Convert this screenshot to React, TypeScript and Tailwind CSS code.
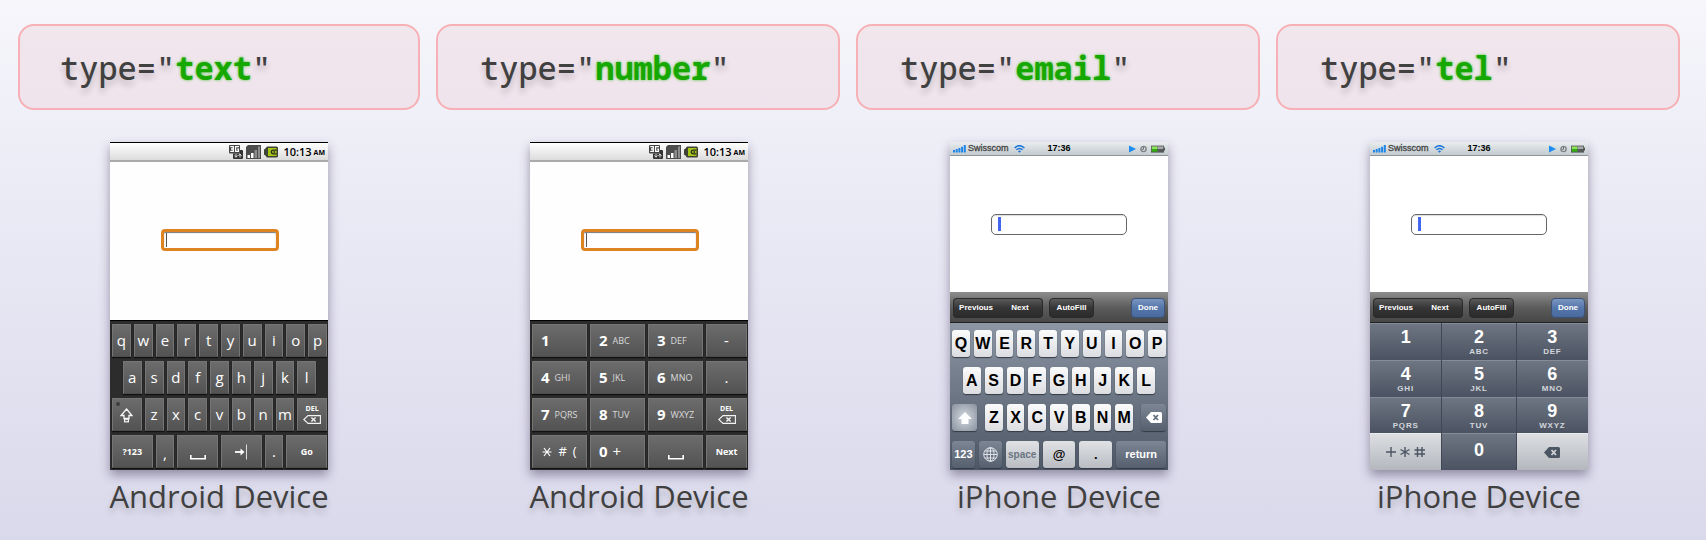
import type { ReactNode } from "react";

const sans = "font-['Open_Sans','Noto_Sans',sans-serif]";

/* ---------- icons ---------- */

function DeleteIcon() {
  return (
    <svg className="h-[9px] w-[18px]" viewBox="0 0 18 9" fill="none" stroke="#f4f4f4">
      <path d="M5 .6H17.4V8.4H5L.8 4.5Z" strokeWidth="1.1" />
      <path d="M8.4 2.5L12.6 6.5M12.6 2.5L8.4 6.5" strokeWidth="1.4" />
    </svg>
  );
}

function BackspaceIcon({ fill, cross }: { fill: string; cross: string }) {
  return (
    <svg className="h-[11px] w-4" viewBox="0 0 16 11">
      <path d="M5 0H14.5Q16 0 16 1.5V9.5Q16 11 14.5 11H5L0 5.5Z" fill={fill} />
      <path d="M7.5 3L12 8M12 3L7.5 8" stroke={cross} strokeWidth="1.8" />
    </svg>
  );
}

function SpaceIcon() {
  return (
    <svg className="mt-3 h-[5px] w-4" viewBox="0 0 16 5" fill="none">
      <path d="M.8 0V3.8H15.2V0" stroke="#fff" strokeWidth="1.6" />
    </svg>
  );
}

function TabIcon() {
  return (
    <svg className="h-4 w-[14px]" viewBox="0 0 14 16" fill="none">
      <path d="M1 8H8" stroke="#fff" strokeWidth="1.8" />
      <path d="M6.5 4.5L10.5 8L6.5 11.5Z" fill="#fff" />
      <path d="M12.5 .5V15.5" stroke="#ddd" />
    </svg>
  );
}

function ShiftOutlineIcon() {
  return (
    <svg className="mt-0.5 h-[15px] w-[13px]" viewBox="0 0 13 15" fill="none" stroke="#f6f6f6">
      <path d="M6.5 1L12 7.5H9V10.5H4V7.5H1Z" strokeWidth="1.3" />
      <rect x="4.6" y="11.2" width="3.8" height="2.6" strokeWidth="1.2" />
    </svg>
  );
}

function ShiftSolidIcon() {
  return (
    <svg className="h-3 w-[14px]" viewBox="0 0 14 12" fill="#fff">
      <path d="M7 0L14 7H10.5V12H3.5V7H0Z" />
    </svg>
  );
}

function GlobeIcon() {
  return (
    <svg className="h-[15px] w-[15px]" viewBox="0 0 15 15" fill="none" stroke="#e8ebef" strokeWidth=".9">
      <circle cx="7.5" cy="7.5" r="6.8" />
      <ellipse cx="7.5" cy="7.5" rx="3.6" ry="6.8" />
      <path d="M7.5 .7V14.3M.7 7.5H14.3M1.8 4H13.2M1.8 11H13.2" />
    </svg>
  );
}

function ThreeGIcon() {
  return (
    <svg className="h-[14px] w-[14px]" viewBox="0 0 14 14" fill="none">
      <rect x="0" y="0" width="11" height="8.5" rx="1" fill="#444" />
      <path d="M1.2 1.7H4.3V6.3H1.2M2 4H4.3M10 1.7H6.6V6.3H9.4V4.2H8.2" stroke="#fff" strokeWidth="1.3" />
      <path d="M11 5H13Q14 5 14 6V13Q14 14 13 14H5Q4 14 4 13V8.5H11Z" fill="#333" />
      <path d="M7 9V12M5.5 10.5L7 12.3L8.5 10.5M11 12.5V9M9.5 10.8L11 9L12.5 10.8" stroke="#ddd" strokeWidth="1" />
    </svg>
  );
}

function AndroidSignalIcon() {
  return (
    <svg className="h-[14px] w-[15px]" viewBox="0 0 15 14">
      <path d="M2 0H15V14H0V2Z" fill="#4c4c4c" />
      <path d="M1.5 10H4V13H1.5ZM5 8H7.5V13H5Z" fill="#fff" />
      <path d="M8.5 5H11V13H8.5ZM12 1.5H14V13H12Z" fill="#8d8d8d" />
    </svg>
  );
}

function AndroidBatteryIcon() {
  return (
    <svg className="h-3 w-[14px]" viewBox="0 0 14 12">
      <path d="M3.5 .5H12.5Q14 .5 14 2V10Q14 11.5 12.5 11.5H3.5Q2 11.5 2 10L0 8.5V3.5L2 2Q2 .5 3.5 .5Z" fill="#3f4336" />
      <rect x="4" y="2" width="8.5" height="8" fill="#a5c714" />
      <path d="M12.5 4.2H9.5Q7.3 4.2 7.3 6T9.5 7.8H12.5M9.5 6H11" stroke="#2c2f22" strokeWidth="1.3" fill="none" />
    </svg>
  );
}

function PhoneSignalIcon() {
  return (
    <svg className="h-2 w-[13px]" viewBox="0 0 13 8" fill="#1d86e8">
      <path d="M0 5H2V7.5H0ZM2.7 4H4.7V7.5H2.7ZM5.4 3H7.4V7.5H5.4ZM8.1 1.8H10.1V7.5H8.1ZM10.8 0H12.8V7.5H10.8Z" />
    </svg>
  );
}

function WifiIcon() {
  return (
    <svg className="h-2 w-[11px]" viewBox="0 0 11 8" fill="none" stroke="#1673dc" strokeWidth="1.4">
      <path d="M.6 3Q5.5 -1.6 10.4 3M2.4 4.8Q5.5 2 8.6 4.8" />
      <path d="M4 6.2Q5.5 5 7 6.2L5.5 7.8Z" fill="#1673dc" stroke="none" />
    </svg>
  );
}

function PhoneStatusIcons() {
  return (
    <svg className="h-2 w-9" viewBox="0 0 36 8">
      <path d="M0 .5L7 4L0 7.5Z" fill="#1b8df0" />
      <circle cx="14.5" cy="4" r="2.6" fill="#d4d8d9" stroke="#7d8385" strokeWidth="1.4" />
      <path d="M14.5 2V4.3H12.8" stroke="#666c6e" strokeWidth=".9" fill="none" />
      <rect x="22" y=".6" width="13" height="7" fill="#58595a" />
      <rect x="22.8" y="1.4" width="5.6" height="2.6" fill="#8fe05c" />
      <rect x="22.8" y="4" width="5.6" height="2.6" fill="#2fae0c" />
      <rect x="28.6" y="1.4" width="5.6" height="2.6" fill="#a8abab" />
      <rect x="35" y="2.5" width="1" height="3" fill="#555" />
    </svg>
  );
}

/* ---------- Android ---------- */

function DroidKey({ children, className = "", label }: { children?: ReactNode; className?: string; label?: string }) {
  return (
    <button
      type="button"
      aria-label={label}
      className={`flex h-[33px] min-w-0 items-center justify-center border border-[#757575] border-b-[#4c4c4c] bg-linear-to-b from-[#6c6c6c] to-[#535353] text-white shadow-[0_1px_1px_#111] ${className}`}
    >
      {children}
    </button>
  );
}

function Letters({ text }: { text: string }) {
  return (
    <>
      {text.split("").map((c) => (
        <DroidKey key={c} className="col-span-2 pb-px text-[15px] leading-none font-medium">
          {c}
        </DroidKey>
      ))}
    </>
  );
}

function DelKey({ className }: { className?: string }) {
  return (
    <DroidKey label="Delete" className={`flex-col gap-0.5 ${className ?? ""}`}>
      <span className="text-[7px] leading-[8px] font-bold">DEL</span>
      <DeleteIcon />
    </DroidKey>
  );
}

function DroidTextKeys() {
  return (
    <div className="grid grid-cols-20 gap-x-[3px] gap-y-1 border-t border-black bg-[#2c2c2c] pt-[3px] pr-px pb-0.5 pl-0.5">
      <Letters text="qwertyuiop" />
      <DroidKey className="col-span-2 col-start-2 pb-px text-[15px] leading-none font-medium">a</DroidKey>
      <Letters text="sdfghjkl" />
      <DroidKey label="Shift" className="relative col-span-3 col-start-1">
        <span className="absolute top-[3px] left-[3px] size-1 rounded-full bg-[#3c3c3c]" />
        <ShiftOutlineIcon />
      </DroidKey>
      <Letters text="zxcvbnm" />
      <DelKey className="col-span-3" />
      <DroidKey className="col-span-4 text-[9px] font-bold">?123</DroidKey>
      <DroidKey className="col-span-2 pt-1 text-[15px] font-medium">,</DroidKey>
      <DroidKey label="Space" className="col-span-4">
        <SpaceIcon />
      </DroidKey>
      <DroidKey label="Tab" className="col-span-4">
        <TabIcon />
      </DroidKey>
      <DroidKey className="col-span-2 text-[15px] font-medium">.</DroidKey>
      <DroidKey className="col-span-4 text-[9px] font-bold">Go</DroidKey>
    </div>
  );
}

function DroidDigit({ digit, sub }: { digit: string; sub?: string }) {
  return (
    <DroidKey className="justify-start! gap-[5px] pl-2 leading-none">
      <span className="text-[15px] font-bold">{digit}</span>
      {sub && <span className="text-[9px] text-[#dadada]">{sub}</span>}
    </DroidKey>
  );
}

function DroidNumberKeys() {
  return (
    <div className="grid grid-cols-[55fr_55fr_55fr_41fr] gap-x-[3px] gap-y-1 border-t border-black bg-[#2c2c2c] pt-[3px] pr-px pb-0.5 pl-0.5">
      <DroidDigit digit="1" />
      <DroidDigit digit="2" sub="ABC" />
      <DroidDigit digit="3" sub="DEF" />
      <DroidKey className="text-[15px] font-medium">-</DroidKey>
      <DroidDigit digit="4" sub="GHI" />
      <DroidDigit digit="5" sub="JKL" />
      <DroidDigit digit="6" sub="MNO" />
      <DroidKey className="text-[15px] font-medium">.</DroidKey>
      <DroidDigit digit="7" sub="PQRS" />
      <DroidDigit digit="8" sub="TUV" />
      <DroidDigit digit="9" sub="WXYZ" />
      <DelKey />
      <DroidKey label="Symbols" className="gap-1.5 text-[13px]">
        <svg className="size-2.5" viewBox="0 0 10 10" fill="none" stroke="#fff" strokeWidth="1.2">
          <path d="M.5 5H9.5M2 1L8 9M8 1L2 9" />
        </svg>
        <span>#</span>
        <span>(</span>
      </DroidKey>
      <DroidKey className="justify-start! gap-[5px] pl-2 leading-none">
        <span className="text-[15px] font-bold">0</span>
        <span className="text-[15px]">+</span>
      </DroidKey>
      <DroidKey label="Space">
        <SpaceIcon />
      </DroidKey>
      <DroidKey className="text-[9px] font-bold">Next</DroidKey>
    </div>
  );
}

function AndroidPhone({ label, children }: { label: string; children: ReactNode }) {
  return (
    <div className={`w-[218px] bg-[#fefefe] shadow-[0_5px_10px_rgba(50,40,70,0.45)] ${sans}`}>
      <div className="flex h-5 items-center justify-end border-t border-b-2 border-t-black border-b-[#aaa] bg-linear-to-b from-white to-[#dcdcdc] pr-[3px] text-black">
        <ThreeGIcon />
        <span className="mx-[3px] flex">
          <AndroidSignalIcon />
        </span>
        <AndroidBatteryIcon />
        <span className="ml-[5px] text-[11px] leading-none font-semibold">10:13</span>
        <span className="ml-0.5 pt-0.5 text-[7px] leading-none font-bold">AM</span>
      </div>
      <div className="flex h-[158px] items-center justify-center pb-0.5 pl-0.5">
        <div className="relative flex">
          <input
            aria-label={label}
            className="h-[22px] w-[118px] rounded-[4px] border-[3px] border-[#df8422] bg-white px-1 text-xs shadow-[inset_0_1px_1px_#777] outline-none"
          />
          <span className="absolute top-1 left-[5px] h-[14px] w-px bg-[#555]" />
        </div>
      </div>
      {children}
    </div>
  );
}

/* ---------- iPhone ---------- */

const arial = "font-['Liberation_Sans',Arial,sans-serif]";

function IPhone({ label, children }: { label: string; children: ReactNode }) {
  const bar =
    "h-5 border border-[#2a2a2a] bg-linear-to-b from-[#5a5a5a] from-0% via-[#353535] via-50% to-[#2b2b2b] text-[8px] font-bold text-white";
  return (
    <div className={`w-[218px] bg-white shadow-[0_5px_10px_rgba(50,40,70,0.45)] ${arial}`}>
      <div className="grid h-[14px] grid-cols-[1fr_auto_1fr] items-center border-b border-[#8c9598] bg-linear-to-b from-[#e9edef] to-[#c3cbce] px-[3px] text-[#444]">
        <span className="flex items-center gap-0.5 text-[9px] leading-none">
          <PhoneSignalIcon />
          <span className="mr-[3px] [-webkit-text-stroke:0.3px_#444]">Swisscom</span>
          <WifiIcon />
        </span>
        <span className="text-[9px] leading-none font-bold text-black">17:36</span>
        <span className="flex justify-end">
          <PhoneStatusIcons />
        </span>
      </div>
      <div className="flex h-[136px] items-center justify-center">
        <div className="relative flex">
          <input
            aria-label={label}
            className="h-[21px] w-[136px] rounded-[5px] border border-[#666] bg-white px-1.5 text-xs shadow-[inset_0_1px_1px_#ddd] outline-none"
          />
          <span className="absolute top-[3px] left-[7px] h-[14px] w-[3px] bg-[#4466ee]" />
        </div>
      </div>
      <div className="flex h-[31px] items-center border-t border-b border-t-[#8c8c8c] border-b-[#222] bg-linear-to-b from-[#8a8a8a] via-[#5c5c5c] via-50% to-[#474747] px-[3px]">
        <button type="button" className={`${bar} w-[45px] rounded-l-sm border-r-0`}>
          Previous
        </button>
        <button type="button" className={`${bar} w-[45px] rounded-r-sm border-l-0`}>
          Next
        </button>
        <button type="button" className={`${bar} ml-1.5 w-[45px] rounded-sm`}>
          AutoFill
        </button>
        <button
          type="button"
          className="ml-auto h-5 w-[34px] rounded-sm border border-[#3b5278] bg-linear-to-b from-[#7a95c0] via-[#5576ab] via-50% to-[#486a9f] text-[8px] font-bold text-white"
        >
          Done
        </button>
      </div>
      {children}
    </div>
  );
}

const keyBase = "flex h-[27px] min-w-0 items-center justify-center rounded-[3px] shadow-[0_1px_1px_#333a44]";
const lightKey = `${keyBase} bg-linear-to-b from-[#fbfbfc] to-[#dcdde1] text-black`;
const silverKey = `${keyBase} bg-linear-to-b from-[#e0e2e5] to-[#b9bdc3]`;
const darkKey = `${keyBase} bg-linear-to-b from-[#7c8694] to-[#555f6e] text-white`;

function AppleLetters({ text }: { text: string }) {
  return (
    <>
      {text.split("").map((c) => (
        <button type="button" key={c} className={`${lightKey} flex-1 text-[16px] leading-none font-bold`}>
          {c}
        </button>
      ))}
    </>
  );
}

function AppleEmailKeys() {
  return (
    <div className="flex flex-col gap-2.5 bg-linear-to-b from-[#8c96a4] to-[#4d5765] px-0.5 pt-[7px] pb-0.5">
      <div className="flex gap-1">
        <AppleLetters text="QWERTYUIOP" />
      </div>
      <div className="flex gap-1 px-[11px]">
        <AppleLetters text="ASDFGHJKL" />
      </div>
      <div className="flex gap-2">
        <button
          type="button"
          aria-label="Shift"
          className={`${keyBase} w-[25px] bg-radial from-[#d5dae0] to-[#87919e]`}
        >
          <ShiftSolidIcon />
        </button>
        <div className="flex flex-1 gap-1">
          <AppleLetters text="ZXCVBNM" />
        </div>
        <button type="button" aria-label="Backspace" className={`${darkKey} w-[25px]`}>
          <BackspaceIcon fill="#fff" cross="#66707e" />
        </button>
      </div>
      <div className="grid grid-cols-[23fr_23fr_33fr_33fr_33fr_50fr] gap-1">
        <button type="button" className={`${darkKey} text-[11px] font-bold`}>
          123
        </button>
        <button type="button" aria-label="Language" className={darkKey}>
          <GlobeIcon />
        </button>
        <button type="button" className={`${silverKey} text-[10px] font-bold text-[#6b7582]`}>
          space
        </button>
        <button type="button" className={`${silverKey} text-[13px] font-bold text-black`}>
          @
        </button>
        <button type="button" className={`${silverKey} text-[13px] font-bold text-black`}>
          .
        </button>
        <button type="button" className={`${darkKey} text-[11px] font-bold`}>
          return
        </button>
      </div>
    </div>
  );
}

const telKeys: [string, string][] = [
  ["1", ""],
  ["2", "ABC"],
  ["3", "DEF"],
  ["4", "GHI"],
  ["5", "JKL"],
  ["6", "MNO"],
  ["7", "PQRS"],
  ["8", "TUV"],
  ["9", "WXYZ"],
];

function AppleTelKeys() {
  const dark = "bg-linear-to-b from-[#6e7683] to-[#4b5362] text-white";
  const silver = "bg-linear-to-b from-[#dcdee1] to-[#b4b8be] border-t border-[#e8eaec]";
  return (
    <div className="grid h-[147px] grid-cols-[72fr_74fr_72fr] grid-rows-4 gap-x-px bg-[#414855]">
      {telKeys.map(([digit, sub]) => (
        <button
          type="button"
          key={digit}
          className={`${dark} flex flex-col items-center border-t border-[#858c98] pt-1`}
        >
          <span className="text-[18px] leading-[19px] font-bold">{digit}</span>
          <span className="text-[8px] leading-[9px] font-bold tracking-widest text-[#d3d6db]">{sub}</span>
        </button>
      ))}
      <button type="button" aria-label="Symbols" className={`${silver} flex items-center justify-center`}>
        <svg className="h-3 w-10" viewBox="0 0 40 12" fill="none" stroke="#4c5563" strokeWidth="1.4">
          <path d="M0 6H10M5 1V11" />
          <path d="M19 1V11M14.5 3.5L23.5 8.5M23.5 3.5L14.5 8.5" />
          <path d="M31.5 1V11M36 1V11M28.5 4H39M28.5 8H39" />
        </svg>
      </button>
      <button type="button" className={`${dark} border-t border-[#858c98] pb-1 text-[18px] leading-none font-bold`}>
        0
      </button>
      <button type="button" aria-label="Backspace" className={`${silver} flex items-center justify-center`}>
        <BackspaceIcon fill="#4c5563" cross="#d0d3d8" />
      </button>
    </div>
  );
}

/* ---------- page ---------- */

function Column({ type, device, children, first = false }: { type: string; device: string; children: ReactNode; first?: boolean }) {
  return (
    <section className="flex min-w-0 flex-1 flex-col">
      <div
        className={`rounded-2xl border-2 border-[#f7b0b5] bg-[#f0c8cf]/30 pt-[21px] pr-4 pb-[19px] ${first ? "ml-0.5 pl-10" : "pl-[42px]"}`}
      >
        <code className="block font-['Noto_Sans_Mono','DejaVu_Sans_Mono',monospace] text-[32px] leading-[42px] font-medium whitespace-nowrap text-[#404040] [text-shadow:0_5px_6px_rgba(0,0,0,0.2)]">
          type="
          <b className="text-[#16a800] [text-shadow:0_0_3px_#45c035]">{type}</b>"
        </code>
      </div>
      <div className="mt-8 flex flex-col items-center pl-0.5">
        {children}
        <h2 className={`mt-1.5 text-[31px] leading-10 font-medium whitespace-nowrap text-[#404040] [text-shadow:0_5px_6px_rgba(0,0,0,0.18)] ${sans}`}>
          {device}
        </h2>
      </div>
    </section>
  );
}

export default function App() {
  return (
    <main className="flex min-h-screen gap-4 bg-linear-to-b from-[#f6f6fb] via-[#ebebf6] via-35% to-[#dad9eb] pt-6 pr-[26px] pb-5 pl-4">
      <Column type="text" device="Android Device" first>
        <AndroidPhone label="Text">
          <DroidTextKeys />
        </AndroidPhone>
      </Column>
      <Column type="number" device="Android Device">
        <AndroidPhone label="Number">
          <DroidNumberKeys />
        </AndroidPhone>
      </Column>
      <Column type="email" device="iPhone Device">
        <IPhone label="Email">
          <AppleEmailKeys />
        </IPhone>
      </Column>
      <Column type="tel" device="iPhone Device">
        <IPhone label="Telephone">
          <AppleTelKeys />
        </IPhone>
      </Column>
    </main>
  );
}
